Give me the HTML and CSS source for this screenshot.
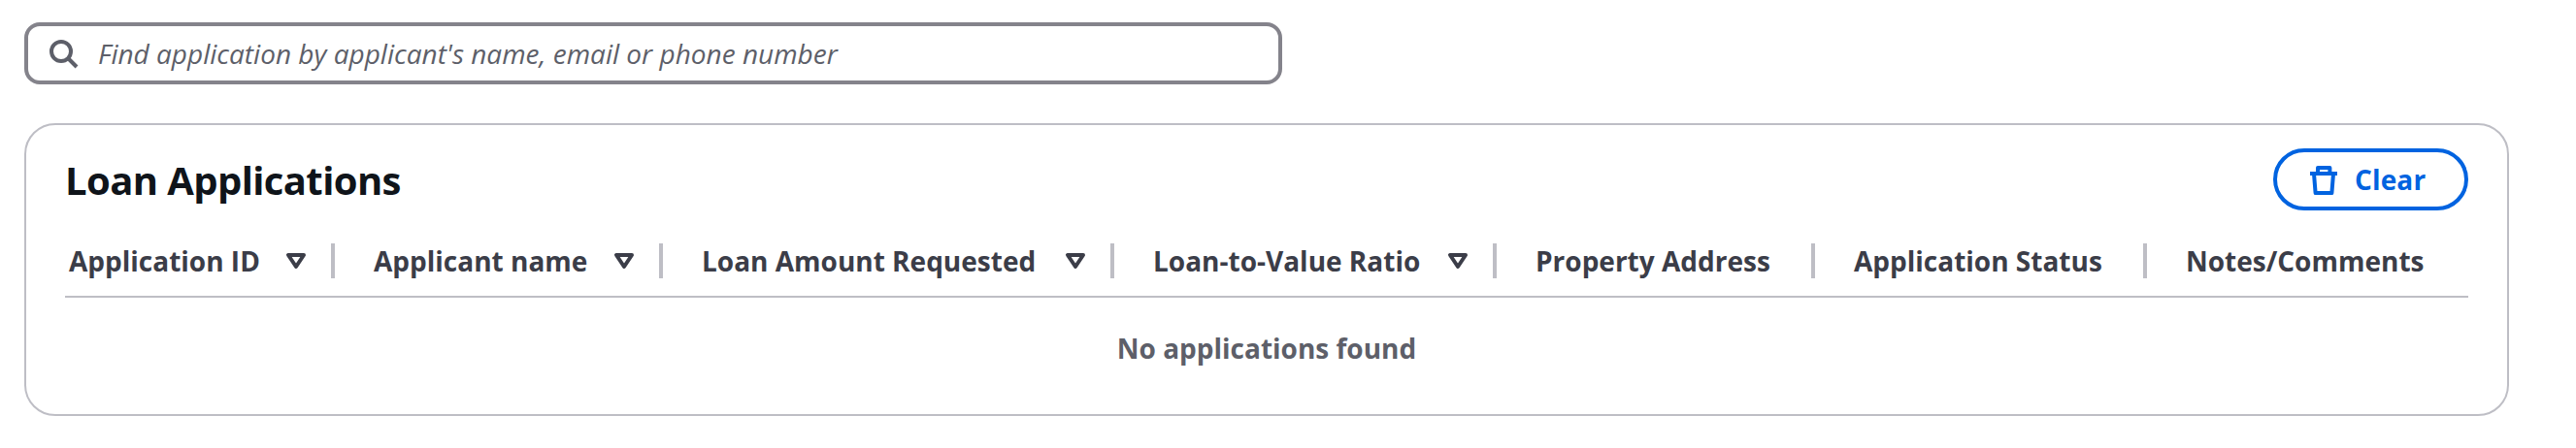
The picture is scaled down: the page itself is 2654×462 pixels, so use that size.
FILE: index.html
```html
<!DOCTYPE html>
<html lang="en">
<head>
<meta charset="utf-8">
<title>Loan Applications</title>
<link rel="stylesheet" href="styles.css">
</head>
<body>
<div class="search">
  <svg class="search-icon" viewBox="0 0 16 16"><circle cx="7" cy="7" r="5"/><path d="m15 15-4.5-4.5"/></svg>
  <span class="placeholder">Find application by applicant's name, email or phone number</span>
</div>
<section class="card">
  <header class="card-header">
    <h2 class="title">Loan Applications</h2>
    <button class="clear" type="button">
      <svg class="trash" viewBox="0 0 16 16"><path d="M1 5h14M5 5V2h6.2v3M3 5l.8 10h8.4L13 5"/></svg>
      <span>Clear</span>
    </button>
  </header>
  <div class="columns">
    <div class="col"><span>Application ID</span><svg class="sort" viewBox="0 0 16 16"><path d="M4 5h8l-4 6-4-6z"/></svg></div>
    <div class="col"><span>Applicant name</span><svg class="sort" viewBox="0 0 16 16"><path d="M4 5h8l-4 6-4-6z"/></svg></div>
    <div class="col"><span>Loan Amount Requested</span><svg class="sort" viewBox="0 0 16 16"><path d="M4 5h8l-4 6-4-6z"/></svg></div>
    <div class="col"><span>Loan-to-Value Ratio</span><svg class="sort" viewBox="0 0 16 16"><path d="M4 5h8l-4 6-4-6z"/></svg></div>
    <div class="col"><span>Property Address</span></div>
    <div class="col"><span>Application Status</span></div>
    <div class="col"><span>Notes/Comments</span></div>
  </div>
  <div class="empty">No applications found</div>
</section>
</body>
</html>
```
FILE: styles.css
```css
* { box-sizing: border-box; }
body {
  margin: 0;
  padding: 23px 69px 0 25px;
  background: #fff;
  font-family: "Open Sans", sans-serif;
  font-size: 28px;
  line-height: 40px;
  white-space: nowrap;
}
.search {
  display: flex;
  align-items: center;
  gap: 20px;
  width: 1296px;
  height: 64px;
  padding: 0 20px;
  border: 4px solid #84838b;
  border-radius: 16px;
  color: #5d5f69;
}
.search-icon {
  width: 32px;
  height: 32px;
  fill: none;
  stroke: currentColor;
  stroke-width: 2;
}
.placeholder { font-style: italic; }
.card {
  height: 302px;
  margin-top: 40px;
  padding: 24px 40px 0;
  border: 2px solid #bebec5;
  border-radius: 32px;
}
.card-header {
  display: flex;
  align-items: center;
  justify-content: space-between;
  height: 64px;
}
.title {
  margin: 0;
  padding-top: 2px;
  font-size: 40px;
  line-height: 48px;
  font-weight: 700;
  letter-spacing: -0.6px;
  color: #0f141a;
}
.clear {
  display: flex;
  align-items: center;
  gap: 16px;
  width: 201px;
  height: 64px;
  padding: 0 0 0 32px;
  border: 4px solid #0063e0;
  border-radius: 32px;
  background: #fff;
  color: #0063e0;
  font: 700 28px/40px "Open Sans", sans-serif;
  letter-spacing: 0.14px;
}
.trash {
  width: 32px;
  height: 32px;
  fill: none;
  stroke: currentColor;
  stroke-width: 2;
  stroke-linejoin: round;
}
.columns {
  display: grid;
  grid-template-columns: 278px 338px 465px 394px 328px 342px 331px;
  height: 90px;
  border-bottom: 2px solid #bebec5;
}
.col {
  display: flex;
  align-items: center;
  justify-content: space-between;
  height: 36px;
  margin-top: 34px;
  padding: 0 20px 0 40px;
  border-right: 4px solid #bebec5;
  font-weight: 700;
  color: #3b3d48;
}
.col:first-child { padding-left: 4px; }
.col:last-child { border-right: 0; }
.sort {
  width: 32px;
  height: 32px;
  fill: none;
  stroke: currentColor;
  stroke-width: 2;
  stroke-linejoin: round;
}
.empty {
  padding-top: 32px;
  text-align: center;
  font-weight: 700;
  color: #5d5f69;
}
```
